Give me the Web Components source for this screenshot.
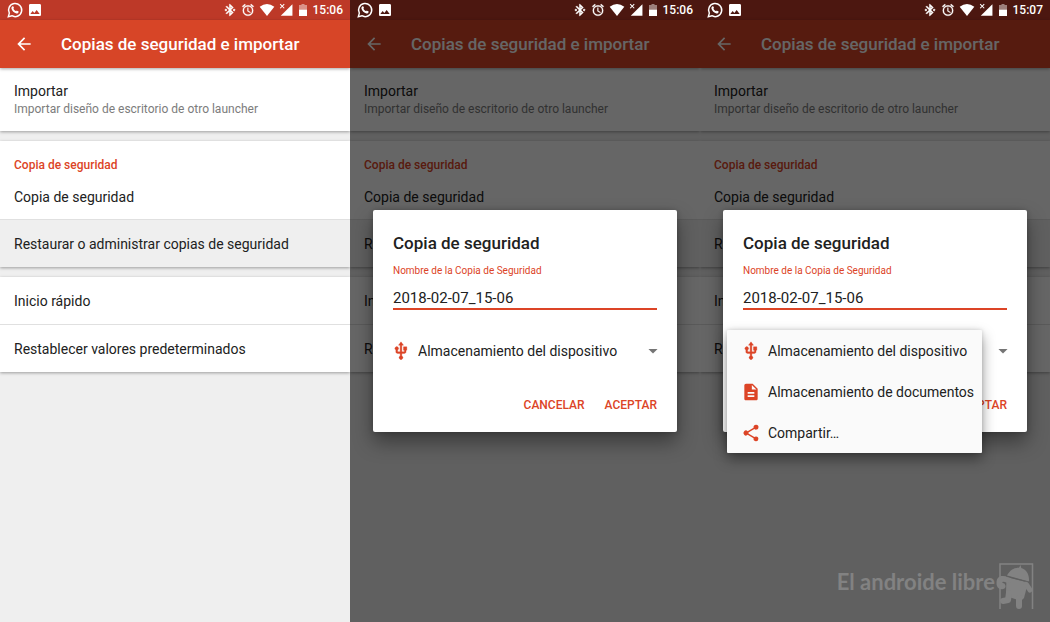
<!DOCTYPE html>
<html lang="es">
<head>
<meta charset="utf-8">
<meta name="viewport" content="width=device-width, initial-scale=1">
<title>Copias de seguridad e importar</title>
<style>
  :root {
    --accent: #dc4426;
    --bar: #d74527;
    --status: #bd3928;
    --status-dim: #4c1710;
    --surface: #fff;
    --ground: #efefef;
    --text: #212121;
    --muted: #7c7c7c;
    --scrim: rgba(0, 0, 0, .6);
  }
  body {
    margin: 0;
    font-family: Roboto, "Liberation Sans", sans-serif;
    font-size: 14px;
    line-height: 20px;
    color: var(--text);
  }
</style>
</head>
<body>
<screen-gallery>
  <phone-screen time="15:06"></phone-screen>
  <phone-screen time="15:06" dimmed>
    <backup-dialog></backup-dialog>
  </phone-screen>
  <phone-screen time="15:07" dimmed>
    <backup-dialog open></backup-dialog>
  </phone-screen>
  <site-watermark slot="mark">El androide libre</site-watermark>
</screen-gallery>

<script>
const define = (name, html, setup) => {
  const template = document.createElement('template');
  template.innerHTML = html;
  customElements.define(name, class extends HTMLElement {
    constructor() {
      super();
      this.attachShadow({ mode: 'open' }).append(template.content.cloneNode(true));
    }
    connectedCallback() {
      if (setup) setup(this, this.shadowRoot);
    }
  });
};

/* Icons share a 24-unit grid */
const ICONS = {
  chat: '<path fill="none" stroke="currentColor" stroke-width="2.2" d="M2 22l1.500-5.300A9.900 9.900 0 1 1 7.300 20.600z"/><path d="M8.300 6.500c.5-.3 1-.2 1.200.3l.9 2c.1.300 0 .6-.8 1.500.9 1.700 2.200 2.900 4 3.700.8-1 1-1.200 1.400-1l2 1c.500.300.5.700.3 1.300-.4 1.300-1.800 2-3.100 1.800-3.500-.6-6.700-3.700-7.500-7-.3-1.400.4-2.800 1.600-3.600z"/>',
  image: '<path d="M21 19V5c0-1.100-.9-2-2-2H5c-1.100 0-2 .9-2 2v14c0 1.100.9 2 2 2h14c1.100 0 2-.9 2-2zM8.500 13.500l2.500 3 3.500-4.500 4.500 6H5l3.500-4.500z"/>',
  bluetooth: '<path d="M7 12l-2-2-2 2 2 2 2-2zm10.700-4.300L12 2h-1v7.600L6.400 5 5 6.400l5.600 5.600L5 17.600 6.400 19l4.600-4.600V22h1l5.700-5.700-4.300-4.300 4.300-4.300zM13 5.800l1.900 1.900L13 9.600V5.800zm1.900 10.500L13 18.200v-3.800l1.900 1.900zM19 10l-2 2 2 2 2-2-2-2z" stroke="currentColor" stroke-width=".8"/>',
  alarm: '<path d="M22 5.700l-4.600-3.900-1.300 1.500 4.600 3.900L22 5.700zM7.900 3.400L6.600 1.900 2 5.700l1.300 1.500 4.600-3.800zM12.500 8H11v6l4.700 2.900.8-1.200-4-2.400V8zM12 4a9 9 0 1 0 0 18 9 9 0 0 0 0-18zm0 16a7 7 0 1 1 0-14 7 7 0 0 1 0 14z" stroke="currentColor" stroke-width=".5"/>',
  wifi: '<path d="M12 21L1 7Q12-1 23 7z"/>',
  signal: '<path d="M23 2v20H3z"/><path fill="none" stroke="currentColor" stroke-width="1.800" d="M2 2l7 7M9 2L2 9"/>',
  battery: '<path opacity=".45" d="M9 0h6v2h5v9H4V2h5z"/><path d="M4 11h16v13H4z"/>',
  back: '<path d="M20 11H7.800l5.600-5.600L12 4l-8 8 8 8 1.400-1.400L7.800 13H20v-2z"/>',
  usb: '<path d="M15 7v4h1v2h-3V5h2l-3-4-3 4h2v8H8v-2.100a2.200 2.200 0 1 0-2.200 0V13c0 1.100.9 2 2.200 2h3v3.100a2.200 2.200 0 1 0 2 0V15h3c1.100 0 2-.9 2-2v-2h1V7h-4z" stroke="currentColor" stroke-width=".4"/>',
  file: '<path d="M14 2H6c-1.100 0-2 .9-2 2v16c0 1.100.9 2 2 2h12c1.100 0 2-.9 2-2V8l-6-6zm2 16H8v-2h8v2zm0-4H8v-2h8v2zm-3-5V3.500L18.500 9H13z"/>',
  share: '<path d="M18 16.100c-.8 0-1.400.3-2 .8l-7.100-4.200a3.300 3.300 0 0 0 0-1.400L16 7.200a3 3 0 1 0-.9-1.500L8 9.800a3 3 0 1 0 0 4.400l7.100 4.200a2.900 2.900 0 1 0 2.900-2.300z"/>',
  caret: '<path d="M6.500 9.500l5.500 5.500 5.500-5.500z"/>'
};

customElements.define('ui-icon', class extends HTMLElement {
  constructor() {
    super();
    this.attachShadow({ mode: 'open' });
  }
  connectedCallback() {
    this.shadowRoot.innerHTML = `
      <style>
        :host { display: block; flex: none; width: var(--icon, 20px); height: var(--icon, 20px); }
        svg { display: block; width: 100%; height: 100%; fill: currentColor; overflow: visible; }
      </style>
      <svg viewBox="0 0 24 24" aria-hidden="true">${ICONS[this.getAttribute('name')]}</svg>`;
  }
});

define('status-bar', `
  <style>
    :host { display: flex; align-items: center; gap: 4px; height: 20px; padding: 0 7px; box-sizing: border-box;
            background: var(--status); color: #fff; --icon: 14px; }
    :host([dimmed]) { background: var(--status-dim); }
    .large { --icon: 16px; }
    .battery { --icon: 12px; }
    .push { margin-left: auto; }
    time { font-size: 12px; font-weight: 500; line-height: 20px; }
  </style>
  <ui-icon class="large" name="chat"></ui-icon>
  <ui-icon class="large" name="image"></ui-icon>
  <ui-icon class="push" name="bluetooth"></ui-icon>
  <ui-icon name="alarm"></ui-icon>
  <ui-icon class="large" name="wifi"></ui-icon>
  <ui-icon name="signal"></ui-icon>
  <ui-icon class="battery" name="battery"></ui-icon>
  <time></time>`, (host, root) => {
  root.querySelector('time').textContent = host.getAttribute('time');
});

define('app-bar', `
  <style>
    :host { display: flex; align-items: center; gap: 27px; height: 48px; padding: 0 14px; box-sizing: border-box;
            position: relative; background: var(--bar); color: #fff; box-shadow: 0 1px 3px rgba(0, 0, 0, .35); }
    button { padding: 0; border: 0; background: none; color: inherit; }
    h2 { margin: 0; font-size: 17px; font-weight: 500; line-height: 24px; white-space: nowrap; }
  </style>
  <button type="button" aria-label="Atrás"><ui-icon name="back"></ui-icon></button>
  <h2><slot></slot></h2>`);

define('settings-card', `
  <style>
    :host { display: block; background: var(--surface); box-shadow: 0 1px 3px rgba(0, 0, 0, .35); }
    h3 { margin: 0; padding: 14px 14px 0; font-size: 12px; font-weight: 500; line-height: 20px; color: var(--accent); }
    h3:empty { display: none; }
  </style>
  <h3></h3>
  <slot></slot>`, (host, root) => {
  root.querySelector('h3').textContent = host.getAttribute('heading') || '';
});

define('settings-item', `
  <style>
    :host { display: block; }
    :host([divided]) { border-top: 1px solid #e0e0e0; }
    :host([pressed]) { background: var(--ground); }
    button { display: block; width: 100%; min-height: 47px; padding: 0 14px; border: 0; background: none;
             font: inherit; color: inherit; text-align: left; }
    :host([tall]) button { min-height: 63px; padding-bottom: 2px; }
    :host([short]) button { min-height: 44px; }
    span { display: block; }
    .note { font-size: 12px; line-height: 16px; color: var(--muted); }
    .note:empty { display: none; }
  </style>
  <button type="button"><span><slot></slot></span><span class="note"></span></button>`, (host, root) => {
  root.querySelector('.note').textContent = host.getAttribute('note') || '';
});

define('phone-screen', `
  <style>
    :host { display: flex; flex-direction: column; position: relative; min-width: 0; min-height: 100vh;
            overflow: clip; background: var(--ground); }
    main { display: flex; flex-direction: column; gap: 10px; }
    .overlay { display: none; position: absolute; inset: 20px 0 0; align-items: center; justify-content: center;
               background: var(--scrim); }
    :host([dimmed]) .overlay { display: flex; }
  </style>
  <status-bar></status-bar>
  <app-bar>Copias de seguridad e importar</app-bar>
  <main>
    <settings-card>
      <settings-item tall note="Importar diseño de escritorio de otro launcher">Importar</settings-item>
    </settings-card>
    <settings-card heading="Copia de seguridad">
      <settings-item short>Copia de seguridad</settings-item>
      <settings-item divided pressed>Restaurar o administrar copias de seguridad</settings-item>
    </settings-card>
    <settings-card>
      <settings-item>Inicio rápido</settings-item>
      <settings-item divided>Restablecer valores predeterminados</settings-item>
    </settings-card>
  </main>
  <div class="overlay"><slot></slot></div>`, (host, root) => {
  const bar = root.querySelector('status-bar');
  bar.toggleAttribute('dimmed', host.hasAttribute('dimmed'));
  bar.shadowRoot.querySelector('time').textContent = host.getAttribute('time');
});

define('storage-menu', `
  <style>
    :host { display: block; width: 255px; background: #fafafa; color: var(--text); border-radius: 1px;
            box-shadow: 0 6px 14px rgba(0, 0, 0, .4), 0 0 4px rgba(0, 0, 0, .15); }
    button { display: flex; align-items: center; gap: 7px; width: 100%; height: 41px; padding: 0 14px; border: 0;
             background: none; font: inherit; color: inherit; white-space: nowrap; }
    ui-icon { color: var(--accent); }
  </style>
  <div role="menu">
    <button type="button" role="menuitem"><ui-icon name="usb"></ui-icon>Almacenamiento del dispositivo</button>
    <button type="button" role="menuitem"><ui-icon name="file"></ui-icon>Almacenamiento de documentos</button>
    <button type="button" role="menuitem"><ui-icon name="share"></ui-icon>Compartir…</button>
  </div>`);

define('backup-dialog', `
  <style>
    :host { display: block; width: 304px; max-width: 100%; box-sizing: border-box; padding: 21px 20px 11px; background: #fff;
            border-radius: 2px; box-shadow: 0 10px 20px rgba(0, 0, 0, .4), 0 0 5px rgba(0, 0, 0, .2); }
    h2 { margin: 0 0 8px; font-size: 17px; font-weight: 500; line-height: 24px; }
    label { display: block; font-size: 10px; line-height: 16px; color: var(--accent); }
    input, select, button { font: inherit; color: inherit; }
    input { display: block; width: 100%; height: 31px; box-sizing: border-box; padding: 8px 0 0; border: 0;
            border-bottom: 2px solid var(--accent); border-radius: 0; outline: 0; background: none; font-size: 15px; }
    .storage { position: relative; display: grid; grid-template-columns: 20px 1fr; column-gap: 7px; align-items: center;
               height: 41px; margin: 20px -6px 18px -2px; }
    .storage > ui-icon { color: var(--accent); }
    select { grid-area: 1 / 2; width: 100%; height: 41px; padding: 0; border: 0; appearance: none; background: none; }
    .storage > .caret { grid-area: 1 / 2; justify-self: end; color: #757575; pointer-events: none; }
    storage-menu { display: none; position: absolute; top: 0; left: -14px; z-index: 1; }
    :host([open]) storage-menu { display: block; }
    footer { display: flex; justify-content: flex-end; gap: 20px; }
    footer button { height: 32px; padding: 0; border: 0; background: none; font-size: 12px; font-weight: 500;
                    color: var(--accent); }
  </style>
  <h2>Copia de seguridad</h2>
  <label for="name">Nombre de la Copia de Seguridad</label>
  <input id="name" type="text" value="2018-02-07_15-06">
  <div class="storage">
    <ui-icon name="usb"></ui-icon>
    <select aria-label="Almacenamiento">
      <option>Almacenamiento del dispositivo</option>
      <option>Almacenamiento de documentos</option>
      <option>Compartir…</option>
    </select>
    <ui-icon class="caret" name="caret"></ui-icon>
    <storage-menu></storage-menu>
  </div>
  <footer>
    <button type="button">CANCELAR</button>
    <button type="button">ACEPTAR</button>
  </footer>`);

define('site-watermark', `
  <style>
    :host { display: flex; align-items: flex-start; color: #828282; font: 700 22px/40px Lato, sans-serif;
            white-space: nowrap; }
    svg { flex: none; width: 40px; height: 48px; overflow: visible; }
  </style>
  <slot></slot>
  <svg viewBox="0 0 40 48" aria-hidden="true">
    <path fill="none" stroke="currentColor" stroke-width="1.500" d="M5 47V2h32.500v45"/>
    <path fill="currentColor" d="M12 13.500C15 8 19 5.500 24 5.700l1.500-2.700.8 3C32 8 34.500 13 34 19.500z"/>
    <path fill="currentColor" d="M11.500 15L33 20.500 29 36q-2 3-6 2l-9-3q-3-1-3-4z"/>
    <g fill="none" stroke="currentColor" stroke-linecap="round" stroke-linejoin="round" stroke-width="6">
      <path d="M13 18Q5 15 4.500 20t3 4"/>
      <path stroke-width="5" d="M31 22l4 6"/>
      <path d="M14 31l-1 7-5 1"/>
      <path d="M24 36v8"/>
    </g>
    <path fill="none" stroke="#606060" stroke-width=".8" d="M11 14.200l23 6"/>
  </svg>`);

define('screen-gallery', `
  <style>
    :host { display: grid; grid-template-columns: repeat(3, 1fr); position: relative; }
    ::slotted(site-watermark) { position: absolute; right: 15px; bottom: 12px; }
  </style>
  <slot></slot>
  <slot name="mark"></slot>`);
</script>
</body>
</html>
